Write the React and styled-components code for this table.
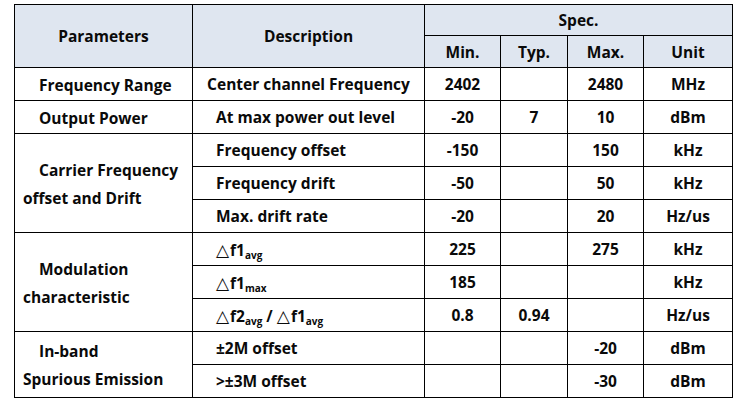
import React from 'react'
import styled, { createGlobalStyle } from 'styled-components'

const GlobalStyle = createGlobalStyle`
  body {
    margin: 0;
    background: #ffffff;
    font-family: "Open Sans", "Noto Sans", sans-serif;
  }
`;

const Page = styled.div`
  padding: 4px 0 0 14px;
`;

const Table = styled.table`
  border-collapse: collapse;
  table-layout: fixed;
  width: 719px;
  color: #0a0a0a;
  font-size: 15.5px;
  font-weight: 700;
  border: 1px solid #000;
`;

const Head = styled.th`
  background: #dfe6f0;
  border: 1px solid #000;
  font-weight: 700;
  text-align: center;
  height: ${p => p.h || 30}px;
  padding: 0;
`;

const Cell = styled.td`
  border: 1px solid #000;
  height: 30px;
  padding: 2px 0 0 ${p => (p.left ? 23 : 0)}px;
  text-align: ${p => (p.left ? 'left' : 'center')};
  line-height: 1.1;
`;

const Param = styled.td`
  border: 1px solid #000;
  padding: 1px 0 0 8px;
  text-align: left;
  line-height: 28px;
  .indent {
    padding-left: 16px;
  }
`;

const Tri = styled.span`
  font-weight: 400;
  font-size: 17px;
  font-family: "DejaVu Sans", sans-serif;
  margin-right: 1px;
`;

const Sub = styled.sub`
  font-size: 10px;
  vertical-align: -3px;
  line-height: 0;
`;

const delta = <Tri>{'\u25B3'}</Tri>;

const rows = [
  { param: ['Frequency Range'], span: 1, desc: 'Center channel Frequency', center: true, min: '2402', typ: '', max: '2480', unit: 'MHz' },
  { param: ['Output Power'], span: 1, desc: 'At max power out level', min: '-20', typ: '7', max: '10', unit: 'dBm' },
  { param: ['Carrier Frequency', 'offset and Drift'], span: 3, desc: 'Frequency offset', min: '-150', typ: '', max: '150', unit: 'kHz' },
  { desc: 'Frequency drift', min: '-50', typ: '', max: '50', unit: 'kHz' },
  { desc: 'Max. drift rate', min: '-20', typ: '', max: '20', unit: 'Hz/us' },
  { param: ['Modulation', 'characteristic'], span: 3, desc: <>{delta}f1<Sub>avg</Sub></>, min: '225', typ: '', max: '275', unit: 'kHz' },
  { desc: <>{delta}f1<Sub>max</Sub></>, min: '185', typ: '', max: '', unit: 'kHz' },
  { desc: <>{delta}f2<Sub>avg</Sub> / {delta}f1<Sub>avg</Sub></>, min: '0.8', typ: '0.94', max: '', unit: 'Hz/us' },
  { param: ['In-band', 'Spurious Emission'], span: 2, desc: '\u00B12M offset', min: '', typ: '', max: '-20', unit: 'dBm' },
  { desc: '>\u00B13M offset', min: '', typ: '', max: '-30', unit: 'dBm' },
];

export default function App() {
  return (
    <Page>
      <GlobalStyle />
      <Table>
        <colgroup>
          <col style={{ width: 178 }} />
          <col style={{ width: 232 }} />
          <col style={{ width: 76 }} />
          <col style={{ width: 67 }} />
          <col style={{ width: 76 }} />
          <col style={{ width: 89 }} />
        </colgroup>
        <thead>
          <tr>
            <Head rowSpan={2}>Parameters</Head>
            <Head rowSpan={2}>Description</Head>
            <Head colSpan={4} h={30}>Spec.</Head>
          </tr>
          <tr>
            <Head h={31}>Min.</Head>
            <Head h={31}>Typ.</Head>
            <Head h={31}>Max.</Head>
            <Head h={31}>Unit</Head>
          </tr>
        </thead>
        <tbody>
          {rows.map((r, i) => (
            <tr key={i}>
              {r.param && (
                r.param.length === 1 ? (
                  <Param rowSpan={r.span}><span className="indent">{r.param[0]}</span></Param>
                ) : (
                  <Param rowSpan={r.span}>
                    <div className="indent">{r.param[0]}</div>
                    <div>{r.param[1]}</div>
                  </Param>
                )
              )}
              <Cell left={!r.center}>{r.desc}</Cell>
              <Cell>{r.min}</Cell>
              <Cell>{r.typ}</Cell>
              <Cell>{r.max}</Cell>
              <Cell>{r.unit}</Cell>
            </tr>
          ))}
        </tbody>
      </Table>
    </Page>
  )
}
